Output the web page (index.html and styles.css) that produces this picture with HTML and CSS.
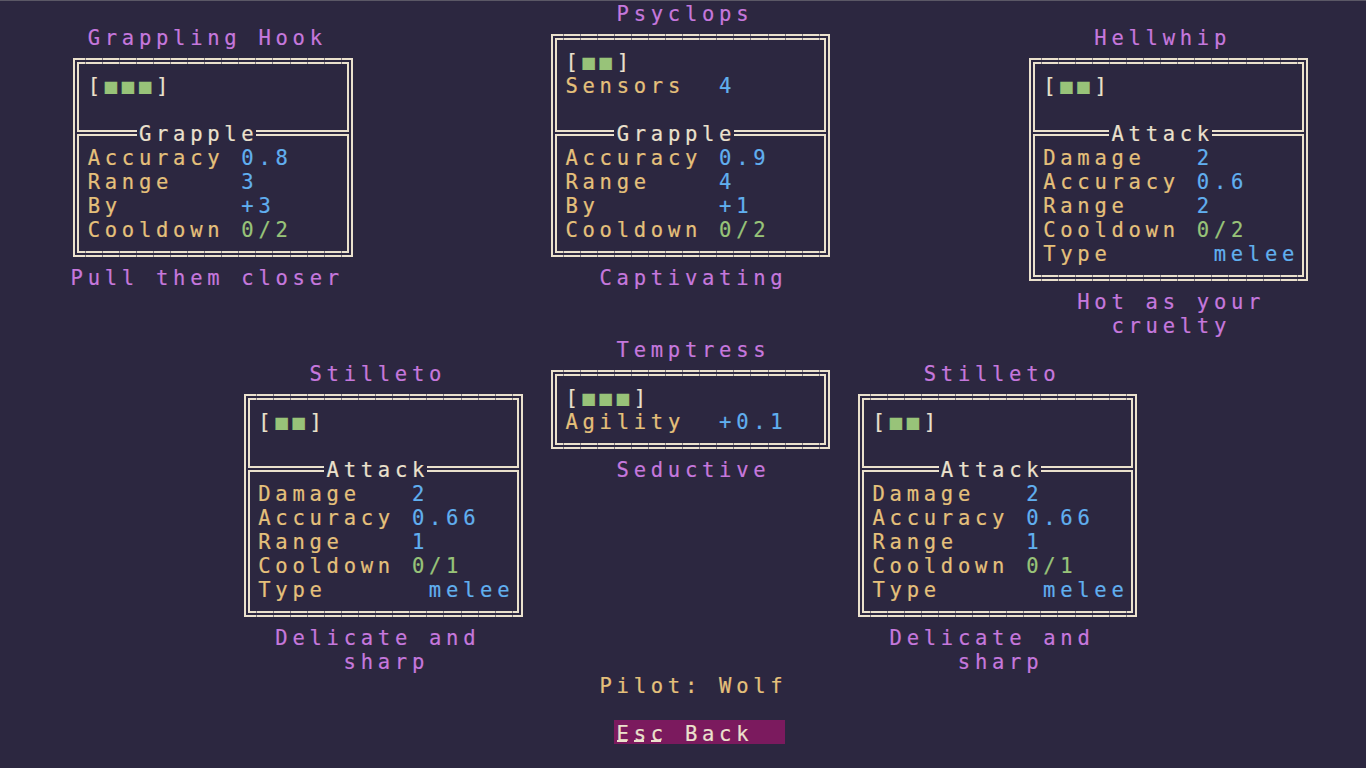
FILE: index.html
```html
<!DOCTYPE html>
<html lang="en">
<head>
<meta charset="utf-8">
<title>Loadout</title>
<link rel="stylesheet" href="styles.css">
</head>
<body>
<main class="screen">
  <div class="txt name psy-name">Psyclops</div>
  <div class="txt name gh-name">Grappling Hook</div>
  <div class="txt name hw-name">Hellwhip</div>

  <section class="frame gh-box">
    <div class="sec top">
      <div class="ln"><span>[</span><span class="pip">■■■</span><span>]</span></div>
      <div class="ln"></div>
    </div>
    <div class="sec bottom">
      <div class="ttl grapple">Grapple</div>
      <div class="ln"><span class="key">Accuracy</span><span class="num">0.8</span></div>
      <div class="ln"><span class="key">Range</span><span class="num">3</span></div>
      <div class="ln"><span class="key">By</span><span class="num">+3</span></div>
      <div class="ln"><span class="key">Cooldown</span><span class="cd">0/2</span></div>
    </div>
  </section>

  <section class="frame psy-box">
    <div class="sec top">
      <div class="ln"><span>[</span><span class="pip">■■</span><span>]</span></div>
      <div class="ln"><span class="key">Sensors</span><span class="num">4</span></div>
      <div class="ln"></div>
    </div>
    <div class="sec bottom">
      <div class="ttl grapple">Grapple</div>
      <div class="ln"><span class="key">Accuracy</span><span class="num">0.9</span></div>
      <div class="ln"><span class="key">Range</span><span class="num">4</span></div>
      <div class="ln"><span class="key">By</span><span class="num">+1</span></div>
      <div class="ln"><span class="key">Cooldown</span><span class="cd">0/2</span></div>
    </div>
  </section>

  <section class="frame hw-box">
    <div class="sec top">
      <div class="ln"><span>[</span><span class="pip">■■</span><span>]</span></div>
      <div class="ln"></div>
    </div>
    <div class="sec bottom">
      <div class="ttl attack">Attack</div>
      <div class="ln"><span class="key">Damage</span><span class="num">2</span></div>
      <div class="ln"><span class="key">Accuracy</span><span class="num">0.6</span></div>
      <div class="ln"><span class="key">Range</span><span class="num">2</span></div>
      <div class="ln"><span class="key">Cooldown</span><span class="cd">0/2</span></div>
      <div class="ln"><span class="key">Type</span><span class="num right">melee</span></div>
    </div>
  </section>

  <div class="txt name gh-desc">Pull them closer</div>
  <div class="txt name psy-desc">Captivating</div>
  <div class="txt name hw-desc1">Hot as your</div>
  <div class="txt name hw-desc2">cruelty</div>

  <div class="txt name tm-name">Temptress</div>
  <div class="txt name st1-name">Stilleto</div>
  <div class="txt name st2-name">Stilleto</div>

  <section class="frame tm-box">
    <div class="sec solo">
      <div class="ln"><span>[</span><span class="pip">■■■</span><span>]</span></div>
      <div class="ln"><span class="key">Agility</span><span class="num">+0.1</span></div>
    </div>
  </section>

  <section class="frame st1-box">
    <div class="sec top">
      <div class="ln"><span>[</span><span class="pip">■■</span><span>]</span></div>
      <div class="ln"></div>
    </div>
    <div class="sec bottom">
      <div class="ttl attack">Attack</div>
      <div class="ln"><span class="key">Damage</span><span class="num">2</span></div>
      <div class="ln"><span class="key">Accuracy</span><span class="num">0.66</span></div>
      <div class="ln"><span class="key">Range</span><span class="num">1</span></div>
      <div class="ln"><span class="key">Cooldown</span><span class="cd">0/1</span></div>
      <div class="ln"><span class="key">Type</span><span class="num right">melee</span></div>
    </div>
  </section>

  <section class="frame st2-box">
    <div class="sec top">
      <div class="ln"><span>[</span><span class="pip">■■</span><span>]</span></div>
      <div class="ln"></div>
    </div>
    <div class="sec bottom">
      <div class="ttl attack">Attack</div>
      <div class="ln"><span class="key">Damage</span><span class="num">2</span></div>
      <div class="ln"><span class="key">Accuracy</span><span class="num">0.66</span></div>
      <div class="ln"><span class="key">Range</span><span class="num">1</span></div>
      <div class="ln"><span class="key">Cooldown</span><span class="cd">0/1</span></div>
      <div class="ln"><span class="key">Type</span><span class="num right">melee</span></div>
    </div>
  </section>

  <div class="txt name tm-desc">Seductive</div>
  <div class="txt name st1-desc1">Delicate and</div>
  <div class="txt name st1-desc2">sharp</div>
  <div class="txt name st2-desc1">Delicate and</div>
  <div class="txt name st2-desc2">sharp</div>

  <div class="txt pilot">Pilot: Wolf</div>
  <div class="txt esc"><span class="hk">E</span><span class="hk">s</span><span class="hk">c</span> Back</div>
</main>
</body>
</html>
```

FILE: styles.css
```css
:root {
  --cw: 17.075px;
  --half: 2.37px;
  --bg: #2c2740;
  --cream: #ebe1cd;
  --purple: #c678dd;
  --gold: #e5c07b;
  --blue: #61afef;
  --green: #98c379;
  --esc: #7b1a5e;
  --tick: rgba(44, 39, 64, 0.55);
}

* { box-sizing: border-box; }

html, body {
  margin: 0;
  padding: 0;
  background: var(--bg);
}

body {
  width: 1366px;
  height: 768px;
  overflow: hidden;
}

.screen {
  width: 1366px;
  height: 768px;
  display: grid;
  grid-template-columns: repeat(80, var(--cw));
  grid-template-rows: repeat(32, 24px);
  font-family: "DejaVu Sans Mono", "Liberation Mono", monospace;
  font-size: 20.5px;
  line-height: 28px;
  letter-spacing: 4.734px;
  color: var(--cream);
  -webkit-text-stroke: 0.2px currentColor;
  box-shadow: inset 0 1px 0 #5b5866;
}

.txt {
  height: 24px;
  padding-left: var(--half);
  white-space: nowrap;
}

.name { color: var(--purple); }
.pilot { color: var(--gold); grid-area: 29 / 36 / span 1 / span 11; }

.esc {
  grid-area: 31 / 37 / span 1 / span 10;
  background: var(--esc);
  color: var(--cream);
}

.hk {
  background: linear-gradient(var(--cream), var(--cream)) no-repeat 0.5px 18px / 10px 2px;
}

/* placements on the 80x32 character grid */
.psy-name  { grid-area: 1 / 37 / span 1 / span 8; }
.gh-name   { grid-area: 2 / 6 / span 1 / span 14; }
.hw-name   { grid-area: 2 / 65 / span 1 / span 8; }
.gh-desc   { grid-area: 12 / 5 / span 1 / span 16; }
.psy-desc  { grid-area: 12 / 36 / span 1 / span 11; }
.hw-desc1  { grid-area: 13 / 64 / span 1 / span 11; }
.hw-desc2  { grid-area: 14 / 66 / span 1 / span 7; }
.tm-name   { grid-area: 15 / 37 / span 1 / span 9; }
.st1-name  { grid-area: 16 / 19 / span 1 / span 8; }
.st2-name  { grid-area: 16 / 55 / span 1 / span 8; }
.tm-desc   { grid-area: 20 / 37 / span 1 / span 9; }
.st1-desc1 { grid-area: 27 / 17 / span 1 / span 12; }
.st1-desc2 { grid-area: 28 / 21 / span 1 / span 5; }
.st2-desc1 { grid-area: 27 / 53 / span 1 / span 12; }
.st2-desc2 { grid-area: 28 / 57 / span 1 / span 5; }

.gh-box  { grid-area: 3 / 5 / 12 / 22; }
.psy-box { grid-area: 2 / 33 / 12 / 50; }
.hw-box  { grid-area: 3 / 61 / 13 / 78; }
.tm-box  { grid-area: 16 / 33 / 20 / 50; }
.st1-box { grid-area: 17 / 15 / 27 / 32; }
.st2-box { grid-area: 17 / 51 / 27 / 68; }

/* double-line boxes */
.frame {
  margin: 10px 5.775px 7px 5px;
  border: 2px solid var(--cream);
  padding: 2px;
  display: flex;
  flex-direction: column;
  gap: 2px;
  position: relative;
}

.frame::after {
  content: "";
  position: absolute;
  inset: -2px;
  pointer-events: none;
  background:
    repeating-linear-gradient(90deg, transparent 0 11.6px, var(--tick) 11.6px 12.6px, transparent 12.6px 17.075px) left top / 100% 6px no-repeat,
    repeating-linear-gradient(90deg, transparent 0 11.6px, var(--tick) 11.6px 12.6px, transparent 12.6px 17.075px) left bottom / 100% 6px no-repeat;
}

.sec {
  border: 2px solid var(--cream);
  padding: 8px 5.3px 10px 6.075px;
}

.sec.bottom,
.sec.solo {
  padding-bottom: 11px;
  flex: 1;
  position: relative;
}

.ln {
  height: 24px;
  display: flex;
  padding-left: var(--half);
  white-space: nowrap;
}

.key {
  flex: none;
  width: calc(9 * var(--cw));
  color: var(--gold);
}

.num { color: var(--blue); }
.cd { color: var(--green); }
.pip { color: var(--green); }

.right {
  margin-left: auto;
  margin-right: calc(-1 * var(--half));
}

.ttl {
  position: absolute;
  top: -16px;
  height: 24px;
  padding-left: var(--half);
  background: var(--bg);
  white-space: nowrap;
  color: var(--cream);
}

.ttl.grapple {
  left: calc(6.075px + 3 * var(--cw));
  width: calc(7 * var(--cw));
}

.ttl.attack {
  left: calc(6.075px + 4 * var(--cw));
  width: calc(6 * var(--cw));
}
```
